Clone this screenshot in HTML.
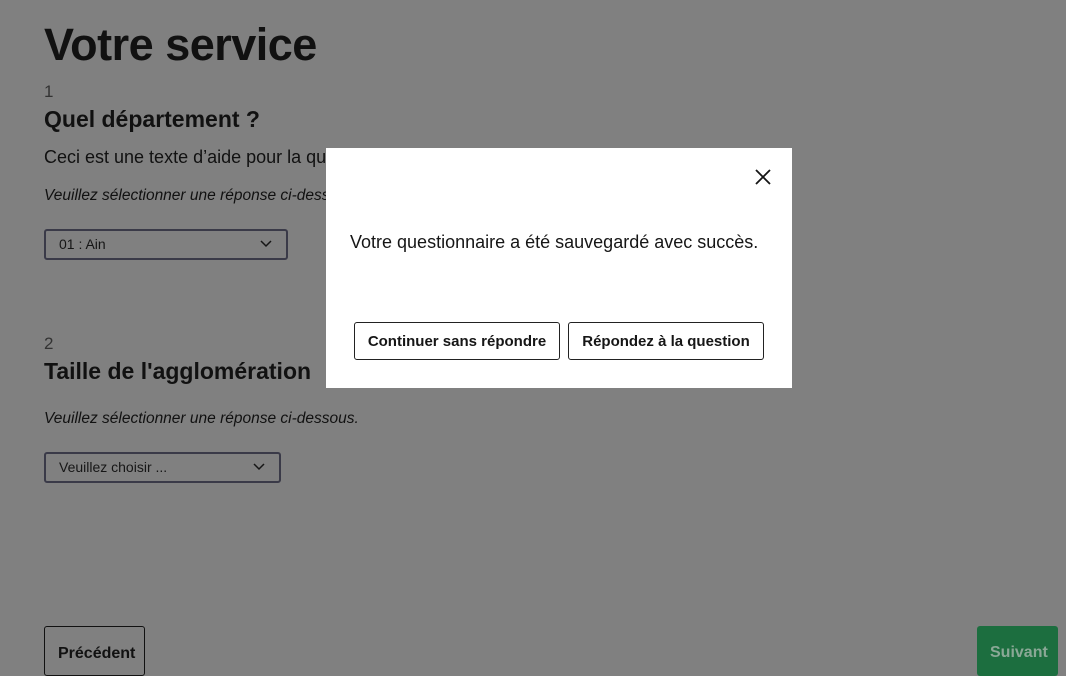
<!DOCTYPE html>
<html><head><meta charset="utf-8"><style>
*{margin:0;padding:0;box-sizing:border-box}
body{width:1066px;height:667px;overflow:hidden;background:#808080;font-family:"Liberation Sans",sans-serif;color:#111;position:relative}
.a{position:absolute;white-space:nowrap}
.sel{position:absolute;border:2px solid #3a3a48;border-radius:3px;height:31px;font-size:14px;padding:5px 13px;color:#161616}
.sel svg{position:absolute;right:14px;top:9px}
.btn{position:absolute;border:1px solid #222;border-radius:3px;background:#fff;font-weight:bold;font-size:15px;display:flex;align-items:center;justify-content:center;color:#161616}
</style></head><body>
<div class="a" style="left:44px;top:19px;font-size:45px;font-weight:bold;letter-spacing:-0.5px">Votre service</div>
<div class="a" style="left:44px;top:82px;font-size:17px;color:#333">1</div>
<div class="a" style="left:44px;top:106px;font-size:23px;font-weight:bold">Quel département ?</div>
<div class="a" style="left:44px;top:147px;font-size:18px">Ceci est une texte d’aide pour la qu</div>
<div class="a" style="left:44px;top:187px;font-size:15.5px;font-style:italic">Veuillez sélectionner une réponse ci-dess</div>
<div class="sel" style="left:44px;top:229px;width:244px">01 : Ain<svg width="12" height="8" viewBox="0 0 12 8"><path d="M1 1l5 5 5-5" fill="none" stroke="#161616" stroke-width="1.5"/></svg></div>
<div class="a" style="left:44px;top:334px;font-size:17px;color:#333">2</div>
<div class="a" style="left:44px;top:358px;font-size:23px;font-weight:bold">Taille de l'agglomération</div>
<div class="a" style="left:44px;top:410px;font-size:15.5px;font-style:italic">Veuillez sélectionner une réponse ci-dessous.</div>
<div class="sel" style="left:44px;top:452px;width:237px">Veuillez choisir ...<svg width="12" height="8" viewBox="0 0 12 8"><path d="M1 1l5 5 5-5" fill="none" stroke="#161616" stroke-width="1.5"/></svg></div>
<div class="a" style="left:44px;top:626px;width:101px;height:50px;border:1px solid #111;border-radius:3px;font-weight:bold;font-size:16px;padding:18px 0 0 13px">Précédent</div>
<div class="a" style="left:977px;top:626px;width:81px;height:50px;background:#1c6e3f;border-radius:3px;font-weight:bold;font-size:16px;padding:18px 0 0 13px;color:#8aa896">Suivant</div>
<div class="a" style="left:326px;top:148px;width:466px;height:240px;background:#fff">
<svg style="position:absolute;left:429px;top:21px" width="16" height="16" viewBox="0 0 16 16"><path d="M1 1L15 15M15 1L1 15" stroke="#161616" stroke-width="1.8"/></svg>
<div class="a" style="left:24px;top:84px;font-size:18px;color:#161616">Votre questionnaire a été sauvegardé avec succès.</div>
<div class="btn" style="left:28px;top:174px;width:206px;height:38px">Continuer sans répondre</div>
<div class="btn" style="left:242px;top:174px;width:196px;height:38px">Répondez à la question</div>
</div>
</body></html>
